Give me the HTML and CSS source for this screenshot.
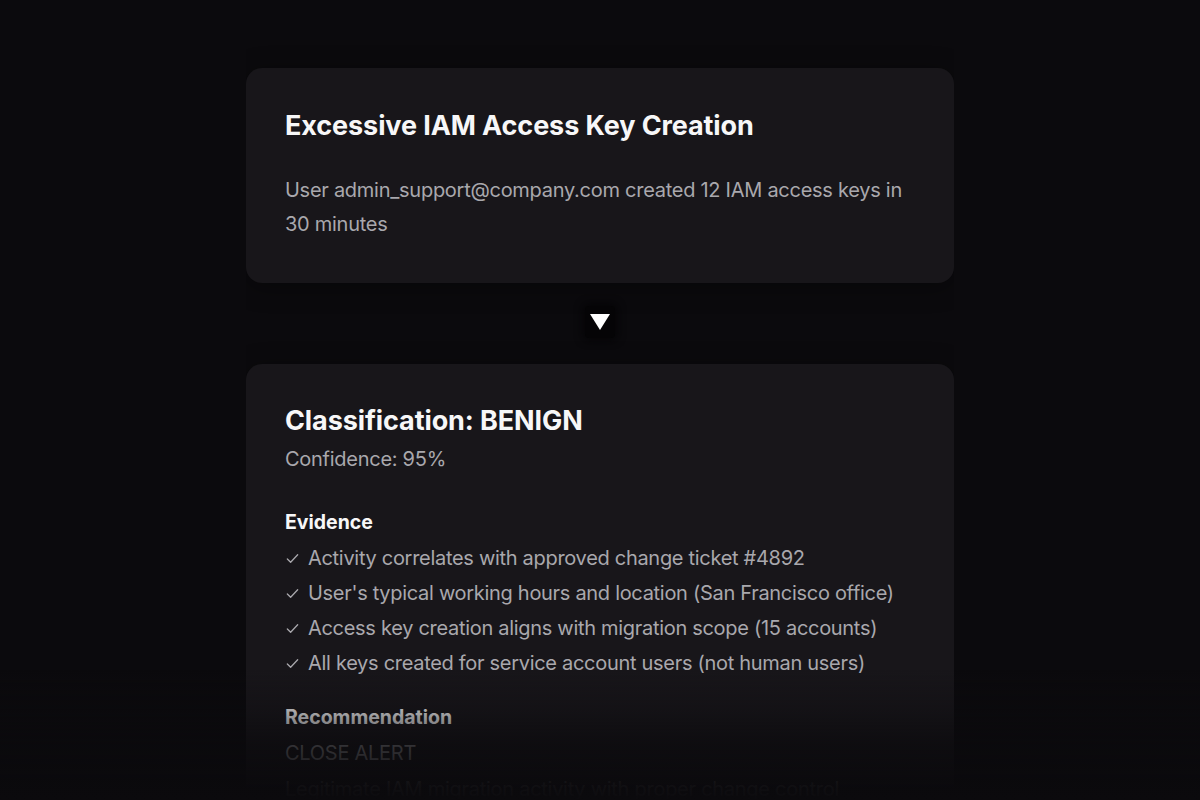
FILE: index.html
```html
<!DOCTYPE html>
<html lang="en">
<head>
<meta charset="utf-8">
<title>Alert triage</title>
<link rel="stylesheet" href="styles.css">
</head>
<body>
<main class="flow">
  <section class="card alert">
    <h1 class="card-title">Excessive IAM Access Key Creation</h1>
    <p class="alert-text">User admin_support@company.com created 12 IAM access keys in 30 minutes</p>
  </section>
  <div class="arrow-wrap"><span class="arrow-box"><span class="arrow"></span></span></div>
  <section class="card result">
    <h2 class="card-title">Classification: BENIGN</h2>
    <p class="confidence">Confidence: 95%</p>
    <h3 class="section-label">Evidence</h3>
    <ul class="evidence">
      <li><svg class="check" viewBox="0 0 16 16" width="15" height="15"><path d="M2.5 8.5l3.5 3.5 7.5-8" fill="none" stroke="currentColor" stroke-width="1.4" stroke-linecap="round" stroke-linejoin="round"/></svg>Activity correlates with approved change ticket #4892</li>
      <li><svg class="check" viewBox="0 0 16 16" width="15" height="15"><path d="M2.5 8.5l3.5 3.5 7.5-8" fill="none" stroke="currentColor" stroke-width="1.4" stroke-linecap="round" stroke-linejoin="round"/></svg>User's typical working hours and location (San Francisco office)</li>
      <li><svg class="check" viewBox="0 0 16 16" width="15" height="15"><path d="M2.5 8.5l3.5 3.5 7.5-8" fill="none" stroke="currentColor" stroke-width="1.4" stroke-linecap="round" stroke-linejoin="round"/></svg>Access key creation aligns with migration scope (15 accounts)</li>
      <li><svg class="check" viewBox="0 0 16 16" width="15" height="15"><path d="M2.5 8.5l3.5 3.5 7.5-8" fill="none" stroke="currentColor" stroke-width="1.4" stroke-linecap="round" stroke-linejoin="round"/></svg>All keys created for service account users (not human users)</li>
    </ul>
    <h3 class="section-label rec">Recommendation</h3>
    <p class="action">CLOSE ALERT</p>
    <p class="rationale">Legitimate IAM migration activity with proper change control</p>
  </section>
</main>
<div class="fade"></div>
</body>
</html>
```
FILE: styles.css
```css
html, body {
  margin: 0;
  padding: 0;
  height: 800px;
  overflow: hidden;
  background: #0b0a0d;
  font-family: "Inter", "Liberation Sans", sans-serif;
  -webkit-font-smoothing: antialiased;
}

.flow {
  width: 708px;
  height: 800px;
  box-sizing: border-box;
  overflow: hidden;
  margin: 0 auto;
  padding-top: 68px;
  display: flex;
  flex-direction: column;
}

.card {
  flex: none;
  background: #18161a;
  border-radius: 16px;
  padding: 41px 39px 42px;
  box-shadow: 0 4px 24px rgba(0, 0, 0, 0.35);
}

.card-title {
  margin: 0;
  font-size: 27px;
  line-height: 34px;
  font-weight: 700;
  color: #f7f7f8;
  letter-spacing: -0.1px;
}

.alert-text {
  margin: 30px 0 0;
  font-size: 20px;
  line-height: 34px;
  color: #a9a8ad;
  letter-spacing: -0.27px;
}

.arrow-wrap {
  flex: none;
  height: 81px;
  display: flex;
  align-items: center;
  justify-content: center;
}

.arrow-box {
  width: 30px;
  height: 32px;
  display: flex;
  align-items: center;
  justify-content: center;
  background: #050406;
  border-radius: 4px;
  box-shadow: 0 0 8px 2px #050406;
  margin-top: -4px;
}

.arrow {
  width: 0;
  height: 0;
  border-left: 10px solid transparent;
  border-right: 10px solid transparent;
  border-top: 16px solid #ffffff;
}

.result {
  padding-top: 40px;
  padding-bottom: 40px;
}

.confidence {
  margin: 7px 0 0;
  font-size: 20px;
  line-height: 28px;
  color: #a9a8ad;
  letter-spacing: -0.27px;
}

.section-label {
  margin: 35px 0 0;
  font-size: 19.5px;
  line-height: 28px;
  font-weight: 700;
  color: #f7f7f8;
}

.evidence {
  list-style: none;
  margin: 8px 0 0;
  padding: 0;
  display: flex;
  flex-direction: column;
  gap: 7px;
}

.evidence li {
  display: flex;
  align-items: center;
  gap: 8px;
  font-size: 20px;
  line-height: 28px;
  color: #a9a8ad;
  letter-spacing: -0.3px;
}

.check {
  flex: none;
  color: #a9a8ad;
}

.section-label.rec {
  margin-top: 26px;
}

.action {
  margin: 8px 0 0;
  font-size: 20px;
  line-height: 28px;
  color: #a9a8ad;
  letter-spacing: -0.27px;
}

.rationale {
  margin: 8px 0 0;
  font-size: 20px;
  line-height: 28px;
  color: #a9a8ad;
  letter-spacing: -0.27px;
}

.fade {
  position: fixed;
  left: 0;
  right: 0;
  bottom: 0;
  height: 130px;
  pointer-events: none;
  background: linear-gradient(to bottom, rgba(11, 10, 13, 0) 0%, rgba(11, 10, 13, 0.3) 30%, rgba(11, 10, 13, 0.75) 58%, rgba(11, 10, 13, 0.96) 88%, rgba(11, 10, 13, 1) 100%);
}
```
